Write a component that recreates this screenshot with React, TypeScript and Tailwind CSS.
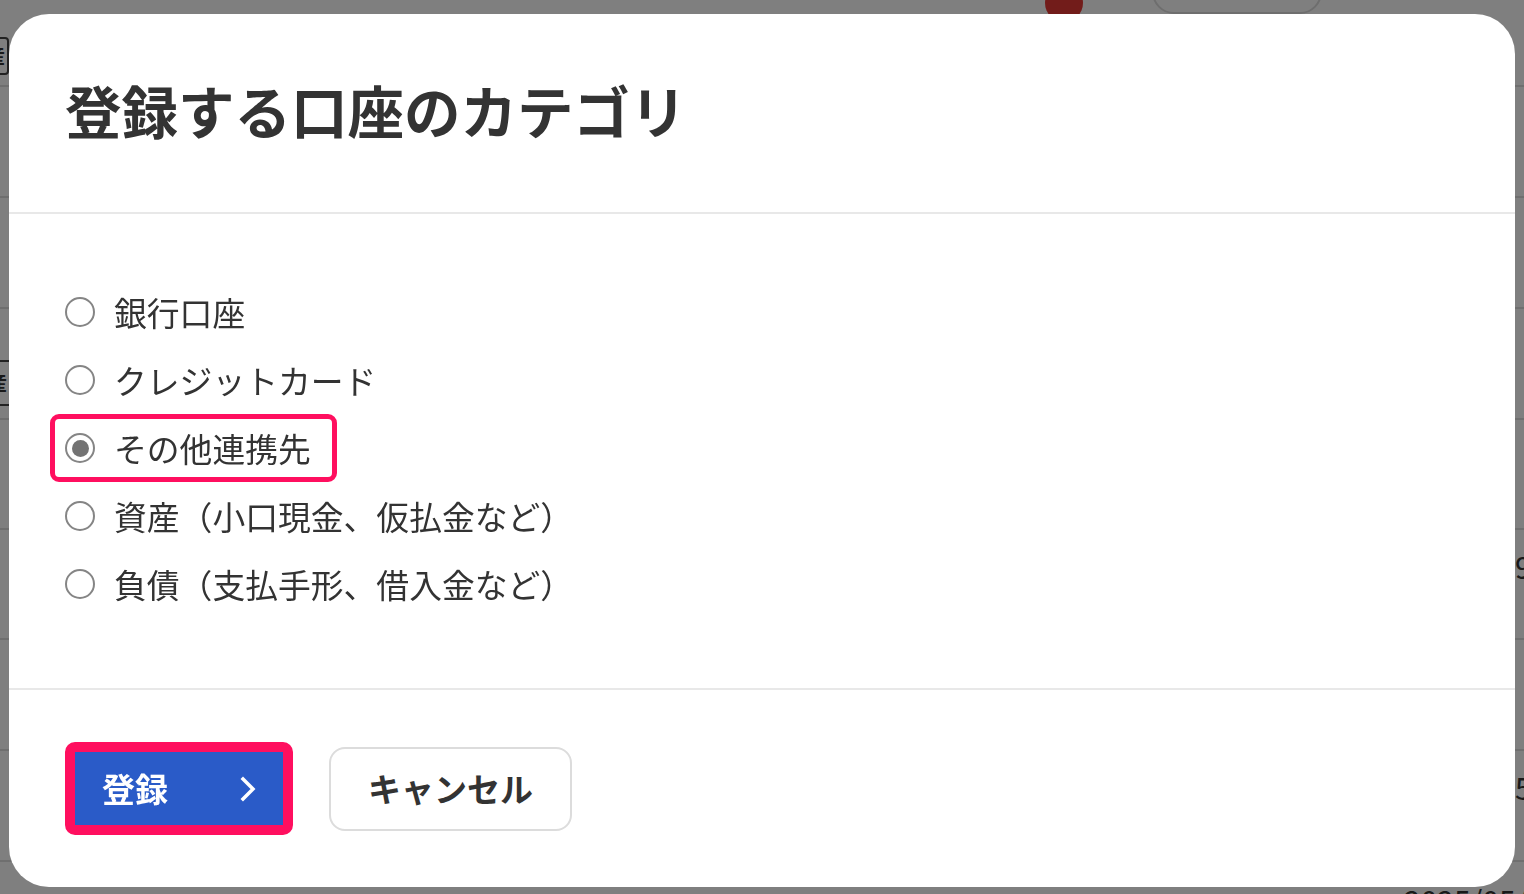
import React from "react"

const font = { fontFamily: '"Noto Sans CJK JP", "Noto Sans", sans-serif' }

const options = [
  { label: "銀行口座", checked: false },
  { label: "クレジットカード", checked: false },
  { label: "その他連携先", checked: true },
  { label: "資産（小口現金、仮払金など）", checked: false },
  { label: "負債（支払手形、借入金など）", checked: false },
]

function Radio({ checked }: { checked: boolean }) {
  return (
    <span className="w-[30px] h-[30px] shrink-0 rounded-full border-2 border-[#858585] bg-white flex items-center justify-center">
      {checked && <span className="w-[17px] h-[17px] rounded-full bg-[#737373]" />}
    </span>
  )
}

function BackgroundPage() {
  return (
    <div className="w-full h-screen overflow-hidden bg-white text-[#333]" style={font}>
      <div className="h-[87px] border-b-2 border-[#dedede] flex items-start">
        <div className="mt-[37px] -ml-[31px] w-[40px] h-[38px] border-2 border-[#444] rounded-[4px] flex items-center justify-end pr-[2px] text-[20px] font-bold leading-none">
          産
        </div>
        <div className="-mt-[16px] ml-[1036px] w-[38px] h-[38px] rounded-full bg-[#e53935]" />
        <div className="-mt-[30px] ml-[69px] w-[170px] h-[44px] border-2 border-[#dcdcdc] rounded-[22px]" />
      </div>
      <div className="h-[111px] border-b-2 border-[#dedede]" />
      <div className="h-[111px] border-b-2 border-[#dedede]" />
      <div className="h-[111px] border-b-2 border-[#dedede] flex items-start">
        <div className="mt-[51px] -ml-[31px] w-[40px] h-[46px] border-y-2 border-[#444] flex items-center justify-end pr-[2px] text-[20px] font-bold leading-none">
          産
        </div>
      </div>
      <div className="h-[110px] border-b-2 border-[#dedede]" />
      <div className="h-[110px] border-b-2 border-[#dedede] flex items-start">
        <span className="mt-[16px] ml-[1515px] text-[30px] leading-[40px]">9</span>
      </div>
      <div className="h-[111px] border-b-2 border-[#dedede]" />
      <div className="h-[111px] border-b-2 border-[#dedede] flex items-start">
        <span className="mt-[16px] ml-[1515px] text-[30px] leading-[40px]">5</span>
      </div>
      <div className="h-[111px] flex items-start">
        <span className="mt-[18px] ml-[1404px] text-[30px] leading-[40px] whitespace-nowrap">2025/05/01</span>
      </div>
    </div>
  )
}

export default function App() {
  return (
    <div className="relative">
      <BackgroundPage />
      <div className="fixed inset-0 bg-black/50 flex justify-center items-start pt-[14px]" style={font}>
        <div className="w-[1506px] h-[873px] bg-white rounded-[40px] flex flex-col overflow-hidden text-[#333]">
          <div className="h-[200px] shrink-0 border-b-2 border-[#e8e8e8] flex items-center pl-[56px] pb-[8px]">
            <h1 className="text-[56.5px] font-bold leading-none tracking-normal">登録する口座のカテゴリ</h1>
          </div>

          <div className="h-[476px] shrink-0 border-b-2 border-[#e8e8e8] pt-[64px] pl-[41px] flex flex-col items-start">
            {options.map((opt) => (
              <label
                key={opt.label}
                className={`inline-flex items-center h-[68px] pl-[10px] pr-[21px] border-[5px] rounded-[9px] gap-[19px] ${
                  opt.checked ? "border-[#ff0f5f]" : "border-transparent"
                }`}
              >
                <Radio checked={opt.checked} />
                <span className="text-[32.8px] leading-none whitespace-nowrap">{opt.label}</span>
              </label>
            ))}
          </div>

          <div className="flex-1 flex items-center pl-[56px] gap-[36px]">
            <button className="w-[228px] h-[93px] border-[10px] border-[#ff0f5f] rounded-[10px] bg-[#2a5bc8] flex items-center justify-between pl-[27px] pr-[27px] text-white">
              <span className="text-[33px] font-bold leading-none">登録</span>
              <svg width="16" height="26" viewBox="0 0 16 26" fill="none">
                <path d="M3 3 L13 13 L3 23" stroke="white" strokeWidth="3.5" strokeLinecap="square" />
              </svg>
            </button>
            <button className="w-[243px] h-[84px] border-2 border-[#dcdcdc] rounded-[16px] bg-white flex items-center justify-center text-[33px] font-bold leading-none text-[#333]">
              キャンセル
            </button>
          </div>
        </div>
      </div>
    </div>
  )
}
